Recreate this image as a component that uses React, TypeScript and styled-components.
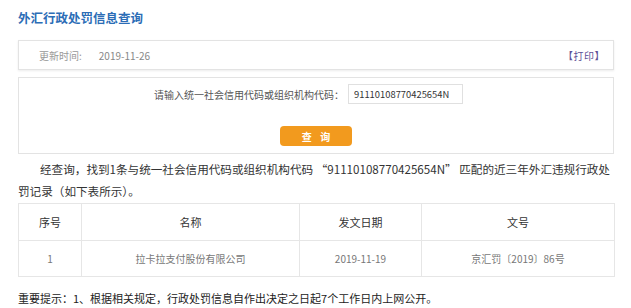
import styled, { createGlobalStyle } from 'styled-components';

const GlobalStyle = createGlobalStyle`
  html, body {
    margin: 0;
    padding: 0;
    background: #fff;
    font-family: "Noto Sans CJK SC", "Noto Sans", "Liberation Sans", sans-serif;
  }
  html {
    min-height: 100%;
    box-shadow: inset -3px 0 4px -1px #d6eaf6;
  }
`;

const Pagina = styled.div`
  width: 596px;
  padding: 10px 17px 0 18px;
`;

const Titulo = styled.h1`
  margin: 0;
  font-size: 12.5px;
  line-height: 16px;
  font-weight: bold;
  color: #2c6db6;
`;

const BarraFecha = styled.div`
  margin-top: 14px;
  height: 28px;
  border: 1px solid #e3e3e3;
  box-shadow: 0 1px 2px rgba(0, 0, 0, 0.08);
  display: flex;
  align-items: center;
  padding: 0 8px 0 20px;
  font-size: 10px;
  color: #999;
`;

const Fecha = styled.span`
  margin-left: 17px;
  color: #888;
  flex: 1;
`;

const Imprimir = styled.span`
  color: #5d5096;
  letter-spacing: 0.5px;
`;

const CajaConsulta = styled.div`
  margin-top: 7px;
  height: 69px;
  border: 1px solid #e3e3e3;
  padding: 6px 0 0;
  display: flex;
  flex-direction: column;
  align-items: center;
`;

const Fila = styled.div`
  display: flex;
  align-items: center;
  padding-right: 15px;
  font-size: 10px;
  color: #555;
`;

const Entrada = styled.input`
  margin-left: 4px;
  width: 108px;
  height: 18px;
  border: 1px solid #e0e0e0;
  padding: 0 0 0 5px;
  font-family: inherit;
  font-size: 9.4px;
  color: #333;
  outline: none;
`;

const Boton = styled.button`
  margin-top: 22px;
  width: 72px;
  height: 20px;
  border: none;
  border-radius: 4px;
  background: #f29a1e;
  color: #fff;
  font-family: inherit;
  font-size: 10px;
  font-weight: bold;
  word-spacing: 6px;
  padding: 0;
`;

const Resultado = styled.p`
  margin: 4px 0 0;
  font-size: 11.6px;
  line-height: 22px;
  color: #333;
  text-indent: 22px;
`;

const Tabla = styled.table`
  margin-top: 1px;
  width: 596px;
  border-collapse: collapse;
  table-layout: fixed;
`;

const Celda = styled.td<{ $cabecera?: boolean }>`
  border: 1px solid #e6e6e6;
  text-align: center;
  height: ${({ $cabecera }) => ($cabecera ? '36px' : '35px')};
  padding: 0;
  font-size: ${({ $cabecera }) => ($cabecera ? '11px' : '10px')};
  color: ${({ $cabecera }) => ($cabecera ? '#333' : '#777')};
`;

const Aviso = styled.p`
  margin: 10px 0 0;
  font-size: 11px;
  line-height: 22px;
  color: #222;
`;

const columnas = [
  { titulo: '序号', ancho: 63 },
  { titulo: '名称', ancho: 218 },
  { titulo: '发文日期', ancho: 122 },
  { titulo: '文号', ancho: 193 },
];

const filas = [['1', '拉卡拉支付股份有限公司', '2019-11-19', '京汇罚〔2019〕86号']];

export default function App() {
  return (
    <>
      <GlobalStyle />
      <Pagina>
        <Titulo>外汇行政处罚信息查询</Titulo>
        <BarraFecha>
          <span>更新时间:</span>
          <Fecha>2019-11-26</Fecha>
          <Imprimir>【打印】</Imprimir>
        </BarraFecha>
        <CajaConsulta>
          <Fila>
            <span>请输入统一社会信用代码或组织机构代码：</span>
            <Entrada defaultValue="91110108770425654N" />
          </Fila>
          <Boton>查 询</Boton>
        </CajaConsulta>
        <Resultado>
          经查询，找到1条与统一社会信用代码或组织机构代码 “91110108770425654N” 匹配的近三年外汇违规行政处罚记录（如下表所示）。
        </Resultado>
        <Tabla>
          <colgroup>
            {columnas.map((c) => (
              <col key={c.titulo} style={{ width: c.ancho }} />
            ))}
          </colgroup>
          <thead>
            <tr>
              {columnas.map((c) => (
                <Celda as="th" key={c.titulo} $cabecera style={{ fontWeight: 'normal' }}>
                  {c.titulo}
                </Celda>
              ))}
            </tr>
          </thead>
          <tbody>
            {filas.map((f, i) => (
              <tr key={i}>
                {f.map((v, j) => (
                  <Celda key={j}>{v}</Celda>
                ))}
              </tr>
            ))}
          </tbody>
        </Tabla>
        <Aviso>重要提示：1、根据相关规定，行政处罚信息自作出决定之日起7个工作日内上网公开。</Aviso>
      </Pagina>
    </>
  );
}
